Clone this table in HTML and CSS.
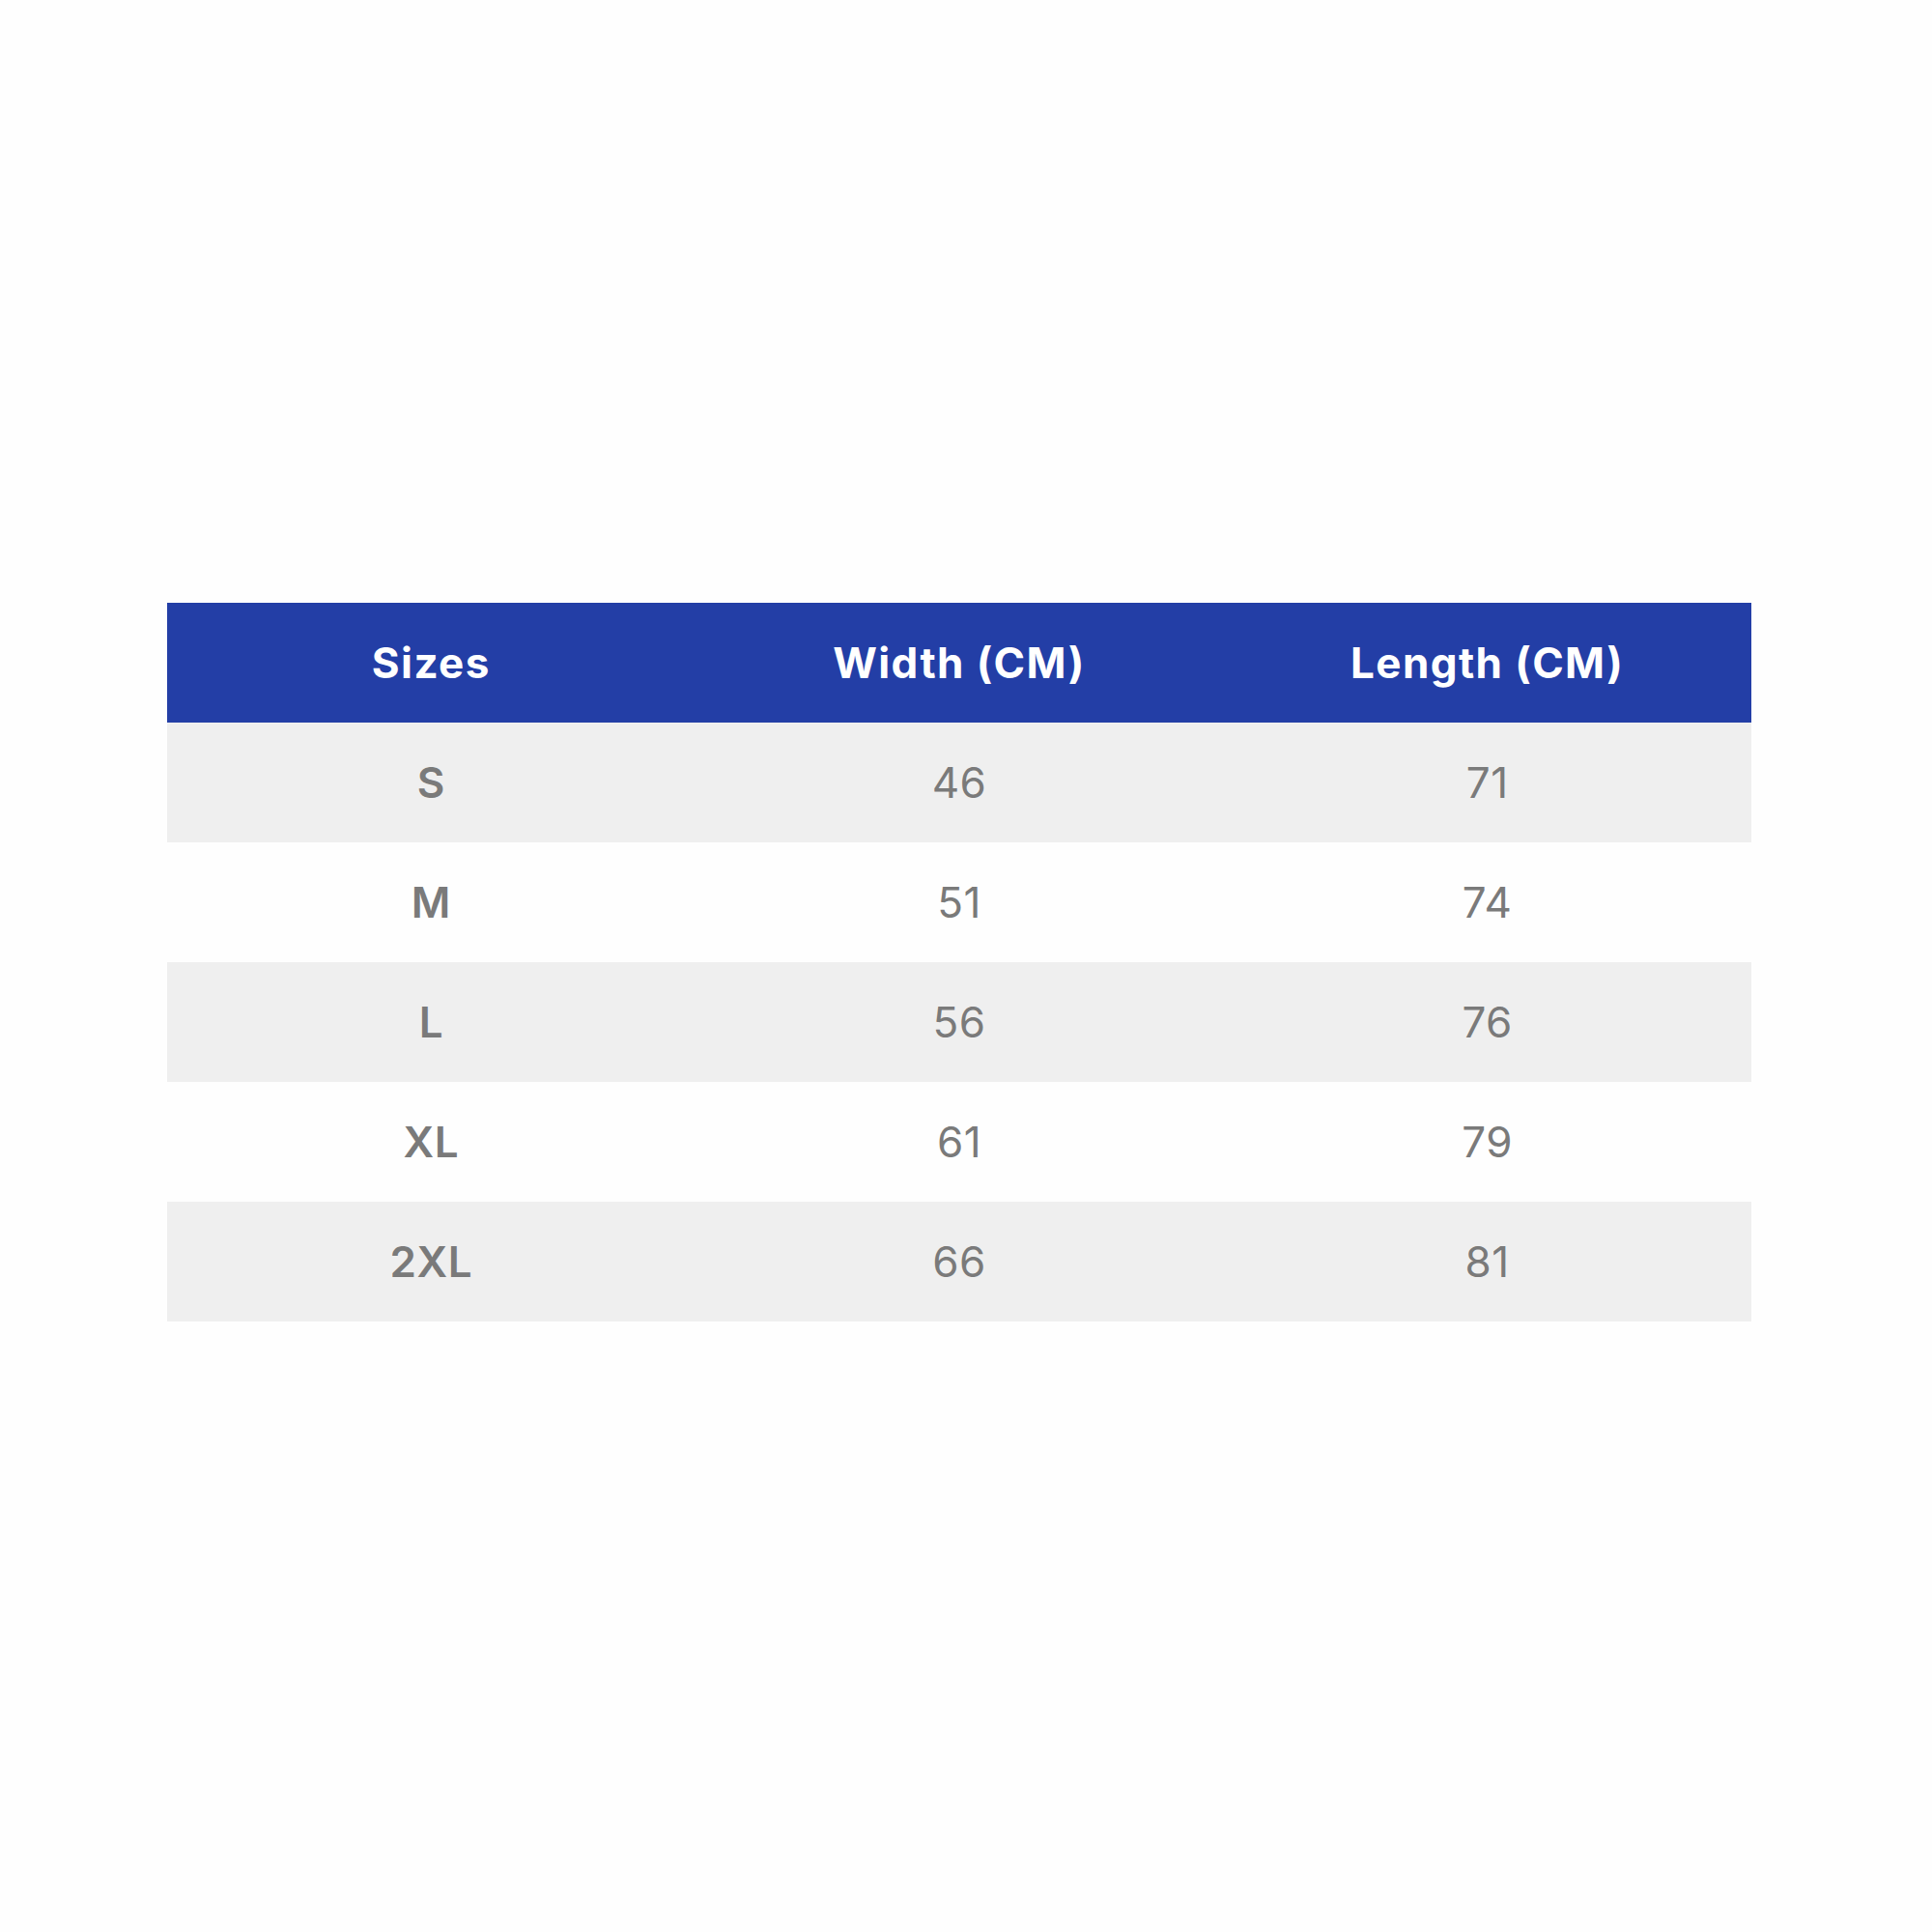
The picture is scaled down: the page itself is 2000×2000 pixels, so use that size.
FILE: index.html
```html
<!DOCTYPE html>
<html>
<head>
<meta charset="utf-8">
<link rel="stylesheet" href="styles.css">
</head>
<body>
<div class="page">
  <table class="sizes">
    <thead>
      <tr><th>Sizes</th><th>Width (CM)</th><th>Length (CM)</th></tr>
    </thead>
    <tbody>
      <tr class="alt"><td class="size">S</td><td>46</td><td>71</td></tr>
      <tr><td class="size">M</td><td>51</td><td>74</td></tr>
      <tr class="alt"><td class="size">L</td><td>56</td><td>76</td></tr>
      <tr><td class="size">XL</td><td>61</td><td>79</td></tr>
      <tr class="alt"><td class="size">2XL</td><td>66</td><td>81</td></tr>
    </tbody>
  </table>
</div>
</body>
</html>
```
FILE: styles.css
```css
html, body {
  margin: 0;
  padding: 0;
  background: #fefefe;
}
.page {
  width: 2000px;
  height: 2000px;
  padding: 624px 0 0 173px;
  box-sizing: border-box;
}
.sizes {
  width: 1640px;
  border-collapse: collapse;
  table-layout: fixed;
  font-family: Inter, "Liberation Sans", sans-serif;
}
.sizes th, .sizes td {
  height: 124px;
  padding: 0;
  text-align: center;
  vertical-align: middle;
}
.sizes th {
  background: #233ea6;
  color: #ffffff;
  font-size: 44px;
  font-weight: 700;
  letter-spacing: 1.4px;
}
.sizes td {
  color: #7a7a7a;
  font-size: 44px;
  font-weight: 400;
  letter-spacing: 0.5px;
}
.sizes td.size {
  font-weight: 600;
}
.sizes tr.alt td {
  background: #efefef;
}
```
